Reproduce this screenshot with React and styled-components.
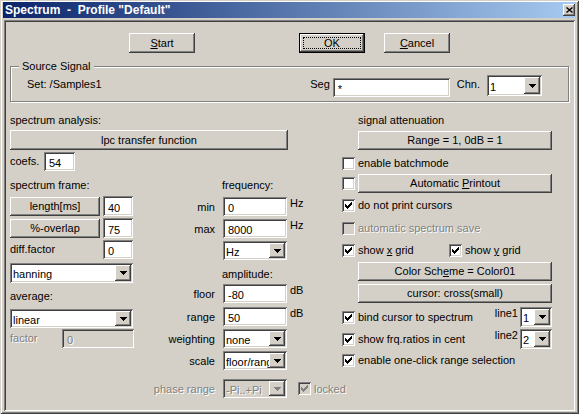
import React from 'react';
import styled, { createGlobalStyle, css } from 'styled-components';

const FACE = '#D4D0C8';

const GlobalStyle = createGlobalStyle`
  html, body {
    margin: 0;
    padding: 0;
    background: ${FACE};
  }
  body {
    font-family: "Liberation Sans", Arial, sans-serif;
    font-size: 11px;
    color: #000;
  }
  * {
    box-sizing: border-box;
  }
`;

// classic win32 bevels
const raised = css`
  box-shadow: inset -1px -1px 0 #404040, inset 1px 1px 0 #fff,
    inset -2px -2px 0 #808080, inset 2px 2px 0 ${FACE};
`;

const sunken = css`
  box-shadow: inset 1px 1px 0 #808080, inset -1px -1px 0 #fff,
    inset 2px 2px 0 #404040, inset -2px -2px 0 ${FACE};
`;

const disabledText = css`
  color: #808080;
  text-shadow: 1px 1px 0 #fff;
`;

const Window = styled.div`
  width: 579px;
  height: 414px;
  background: ${FACE};
  display: flex;
  flex-direction: column;
  padding: 2px 3px 3px 3px;
  box-shadow: inset 1px 1px 0 ${FACE}, inset -1px -1px 0 #404040,
    inset 2px 2px 0 #fff, inset -2px -2px 0 #808080;
`;

const TitleBar = styled.div`
  height: 16px;
  flex: none;
  display: flex;
  align-items: center;
  background: linear-gradient(to right, #0a246a, #a6caf0);
  padding: 0 1px 0 2px;
`;

const TitleText = styled.div`
  flex: 1;
  color: #fff;
  font-weight: bold;
  font-size: 12px;
  white-space: pre;
`;

const CloseButton = styled.div`
  width: 12px;
  height: 12px;
  background: ${FACE};
  display: flex;
  align-items: center;
  justify-content: center;
  ${raised}
`;

const Client = styled.div`
  flex: 1;
  margin: 2px 1px 0 1px;
  padding: 2px;
  display: flex;
  flex-direction: column;
  ${sunken}
`;

const ButtonRow = styled.div`
  display: flex;
  margin-top: 11px;
  height: 20px;
`;

const Button = styled.button`
  font: inherit;
  color: #000;
  background: ${FACE};
  border: 0;
  padding: 0 0 1px 0;
  margin: ${p => p.$mt || 0}px 0 0 ${p => p.$ml || 0}px;
  width: ${p => p.$w}px;
  height: ${p => p.$h || 20}px;
  flex: none;
  text-align: center;
  white-space: nowrap;
  ${raised}
`;

const DefaultButton = styled(Button)`
  border: 1px solid #000;
  padding: 3px;
  display: flex;
  align-items: stretch;
`;

const FocusRect = styled.span`
  flex: 1;
  border: 1px dotted #000;
  display: flex;
  align-items: center;
  justify-content: center;
`;

const GroupBox = styled.div`
  position: relative;
  margin: 13px 4px 0 4px;
  height: 36px;
  border: 1px solid #808080;
  box-shadow: 1px 1px 0 #fff, inset 1px 1px 0 #fff;
  display: flex;
  align-items: flex-start;
  padding: 9px 26px 0 16px;
`;

const Legend = styled.span`
  position: absolute;
  top: -7px;
  left: 8px;
  padding: 0 3px;
  background: ${FACE};
  line-height: 13px;
`;

const GroupLabel = styled.span`
  line-height: 13px;
  margin-top: 2px;
  margin-left: ${p => (p.$ml === 'auto' ? 'auto' : `${p.$ml || 0}px`)};
  white-space: nowrap;
`;

const Field = styled.div`
  width: ${p => p.$w}px;
  height: ${p => p.$h || 19}px;
  margin: ${p => p.$mt || 0}px 0 0 ${p => p.$ml || 0}px;
  flex: none;
  background: ${p => (p.$disabled ? FACE : '#fff')};
  display: flex;
  align-items: center;
  padding: 3px 2px 0 5px;
  white-space: nowrap;
  overflow: hidden;
  ${sunken}
  ${p => p.$disabled && disabledText}
`;

const SelectBox = styled.div`
  width: ${p => p.$w}px;
  height: ${p => p.$h || 19}px;
  margin: ${p => p.$mt || 0}px 0 0 ${p => p.$ml || 0}px;
  flex: none;
  background: ${p => (p.$disabled ? FACE : '#fff')};
  display: flex;
  padding: 2px;
  ${sunken}
`;

const SelectText = styled.span`
  flex: 1;
  display: flex;
  align-items: center;
  padding: 2px 0 0 1px;
  overflow: hidden;
  white-space: nowrap;
  ${p => p.$disabled && disabledText}
`;

const DropArrow = styled.span`
  width: 16px;
  flex: none;
  background: ${FACE};
  display: flex;
  align-items: center;
  justify-content: center;
  ${raised}
`;

const Body = styled.div`
  display: flex;
  margin-top: 11px;
  padding-left: 4px;
`;

const LeftPane = styled.div`
  width: 332px;
  flex: none;
  display: flex;
  flex-direction: column;
`;

const RightPane = styled.div`
  width: 210px;
  flex: none;
  display: flex;
  flex-direction: column;
`;

const Text = styled.div`
  height: ${p => p.$h || 14}px;
  line-height: ${p => p.$h || 14}px;
  width: ${p => (p.$w ? `${p.$w}px` : 'auto')};
  flex: none;
  margin-top: ${p => p.$mt || 0}px;
  padding-left: ${p => p.$pl || 0}px;
  white-space: nowrap;
  ${p => p.$disabled && disabledText}
`;

const Row = styled.div`
  display: flex;
  align-items: center;
  height: ${p => p.$h || 19}px;
  margin-top: ${p => p.$mt || 0}px;
`;

const Columns = styled.div`
  display: flex;
  margin-top: 7px;
`;

const ColA = styled.div`
  width: 124px;
  flex: none;
  display: flex;
  flex-direction: column;
`;

const ColB = styled.div`
  margin-left: 6px;
  display: flex;
  flex-direction: column;
`;

const RowLabel = styled.span`
  width: 75px;
  margin-right: 8px;
  flex: none;
  text-align: right;
  white-space: nowrap;
  ${p => p.$disabled && disabledText}
`;

const Unit = styled.span`
  margin-left: 3px;
  align-self: flex-start;
  line-height: 13px;
`;

const CheckItem = styled.div`
  display: flex;
  align-items: center;
  flex: none;
  width: ${p => (p.$w ? `${p.$w}px` : 'auto')};
  margin-left: ${p => p.$ml || 0}px;
`;

const CheckSquare = styled.span`
  width: 13px;
  height: 13px;
  flex: none;
  background: ${p => (p.$disabled ? FACE : '#fff')};
  display: flex;
  align-items: center;
  justify-content: center;
  ${sunken}
`;

const CheckLabel = styled.span`
  margin-left: 3px;
  white-space: nowrap;
  ${p => p.$disabled && disabledText}
`;

const LineLabel = styled.span`
  margin-left: auto;
  margin-right: 2px;
  align-self: flex-start;
  line-height: 13px;
`;

const CHECK_BITS = [
  '......#',
  '.....##',
  '#...###',
  '##.###.',
  '#####..',
  '.###...',
  '..#....',
];

const CheckMark = ({ color }) => (
  <svg width="7" height="7" viewBox="0 0 7 7" shapeRendering="crispEdges">
    {CHECK_BITS.flatMap((row, y) =>
      row.split('').map((c, x) =>
        c === '#' ? <rect key={`${x}-${y}`} x={x} y={y} width="1" height="1" fill={color} /> : null
      )
    )}
  </svg>
);

const CheckBox = ({ checked, disabled }) => (
  <CheckSquare $disabled={disabled}>
    {checked && <CheckMark color={disabled ? '#808080' : '#000'} />}
  </CheckSquare>
);

const Check = ({ checked, disabled, w, ml, children }) => (
  <CheckItem $w={w} $ml={ml}>
    <CheckBox checked={checked} disabled={disabled} />
    <CheckLabel $disabled={disabled}>{children}</CheckLabel>
  </CheckItem>
);

const Select = ({ w, h, mt, ml, disabled, children }) => (
  <SelectBox $w={w} $h={h} $mt={mt} $ml={ml} $disabled={disabled}>
    <SelectText $disabled={disabled}>{children}</SelectText>
    <DropArrow>
      <svg width="7" height="4" viewBox="0 0 7 4" shapeRendering="crispEdges">
        <path d="M0 0H7V1H6V2H5V3H4V4H3V3H2V2H1V1H0Z" fill={disabled ? '#808080' : '#000'} />
      </svg>
    </DropArrow>
  </SelectBox>
);

export default function App() {
  return (
    <>
      <GlobalStyle />
      <Window>
        <TitleBar>
          <TitleText>Spectrum  -  Profile "Default"</TitleText>
          <CloseButton>
            <svg width="7" height="6" viewBox="0 0 7 6">
              <path d="M0.5 0.5L6.5 5.5M6.5 0.5L0.5 5.5" stroke="#000" strokeWidth="1.4" />
            </svg>
          </CloseButton>
        </TitleBar>
        <Client>
          <ButtonRow>
            <Button $w={66} $ml={123}><u>S</u>tart</Button>
            <DefaultButton $w={66} $ml={104}><FocusRect>OK</FocusRect></DefaultButton>
            <Button $w={66} $ml={19}><u>C</u>ancel</Button>
          </ButtonRow>

          <GroupBox>
            <Legend>Source Signal</Legend>
            <GroupLabel>Set: /Samples1</GroupLabel>
            <GroupLabel $ml="auto">Seg</GroupLabel>
            <Field $w={117} $mt={2} $ml={3}>*</Field>
            <GroupLabel $ml={7}>Chn.</GroupLabel>
            <Select w={55} h={21} mt={-1} ml={7}>1</Select>
          </GroupBox>

          <Body>
            <LeftPane>
              <Text>spectrum analysis:</Text>
              <Button $w={278} $h={20} $mt={3}>lpc transfer function</Button>
              <Row $mt={2} $h={19}>
                <Text $w={34} $h={13}>coefs.</Text>
                <Field $w={31}>54</Field>
              </Row>
              <Columns>
                <ColA>
                  <Text>spectrum frame:</Text>
                  <Row $mt={4} $h={20}>
                    <Button $w={90} $h={19}>length[ms]</Button>
                    <Field $w={30} $h={20} $ml={3}>40</Field>
                  </Row>
                  <Row $mt={2} $h={20}>
                    <Button $w={90} $h={19}>%-overlap</Button>
                    <Field $w={30} $h={20} $ml={3}>75</Field>
                  </Row>
                  <Row $mt={2} $h={19}>
                    <Text $w={93} $h={13}>diff.factor</Text>
                    <Field $w={30}>0</Field>
                  </Row>
                  <Select w={123} h={20} mt={4}>hanning</Select>
                  <Text $mt={6}>average:</Text>
                  <Select w={123} h={19} mt={6}>linear</Select>
                  <Row $mt={1} $h={19}>
                    <Text $w={52} $h={13} $disabled>factor</Text>
                    <Field $w={72} $disabled>0</Field>
                  </Row>
                </ColA>
                <ColB>
                  <Text $pl={82}>frequency:</Text>
                  <Row $mt={5}>
                    <RowLabel>min</RowLabel>
                    <Field $w={64}>0</Field>
                    <Unit>Hz</Unit>
                  </Row>
                  <Row $mt={3}>
                    <RowLabel>max</RowLabel>
                    <Field $w={64}>8000</Field>
                    <Unit>Hz</Unit>
                  </Row>
                  <Row $mt={3}>
                    <RowLabel />
                    <Select w={64}>Hz</Select>
                  </Row>
                  <Text $mt={7} $pl={82}>amplitude:</Text>
                  <Row $mt={3}>
                    <RowLabel>floor</RowLabel>
                    <Field $w={64}>-80</Field>
                    <Unit>dB</Unit>
                  </Row>
                  <Row $mt={4}>
                    <RowLabel>range</RowLabel>
                    <Field $w={64}>50</Field>
                    <Unit>dB</Unit>
                  </Row>
                  <Row $mt={3}>
                    <RowLabel>weighting</RowLabel>
                    <Select w={64}>none</Select>
                  </Row>
                  <Row $mt={3}>
                    <RowLabel>scale</RowLabel>
                    <Select w={64}>floor/range</Select>
                  </Row>
                  <Row $mt={9}>
                    <RowLabel $disabled>phase range</RowLabel>
                    <Select w={64} disabled>-Pi..+Pi</Select>
                    <Check checked disabled ml={11}>locked</Check>
                  </Row>
                </ColB>
              </Columns>
            </LeftPane>

            <RightPane>
              <Text $pl={16}>signal attenuation</Text>
              <Button $w={194} $h={19} $mt={4} $ml={16}>Range = 1, 0dB = 1</Button>
              <Row $mt={4} $h={18}>
                <Check>enable batchmode</Check>
              </Row>
              <Row $mt={2} $h={19}>
                <CheckBox />
                <Button $w={194} $h={19} $ml={3}>Automatic <u>P</u>rintout</Button>
              </Row>
              <Row $mt={3} $h={18}>
                <Check checked>do not print cursors</Check>
              </Row>
              <Row $mt={5} $h={18}>
                <Check disabled>automatic spectrum save</Check>
              </Row>
              <Row $mt={4} $h={18}>
                <Check checked w={107}>show <u>x</u> grid</Check>
                <Check checked>show <u>y</u> grid</Check>
              </Row>
              <Button $w={194} $h={19} $mt={3} $ml={16}>Color Sch<u>e</u>me = Color01</Button>
              <Button $w={194} $h={19} $mt={3} $ml={16}>cursor: cross(small)</Button>
              <Row $mt={4} $h={20}>
                <Check checked>bind cursor to spectrum</Check>
                <LineLabel>line1</LineLabel>
                <Select w={32} h={20}>1</Select>
              </Row>
              <Row $mt={2} $h={20}>
                <Check checked>show frq.ratios in cent</Check>
                <LineLabel>line2</LineLabel>
                <Select w={32} h={20}>2</Select>
              </Row>
              <Row $mt={2} $h={18}>
                <Check checked>enable one-click range selection</Check>
              </Row>
            </RightPane>
          </Body>
        </Client>
      </Window>
    </>
  );
}
